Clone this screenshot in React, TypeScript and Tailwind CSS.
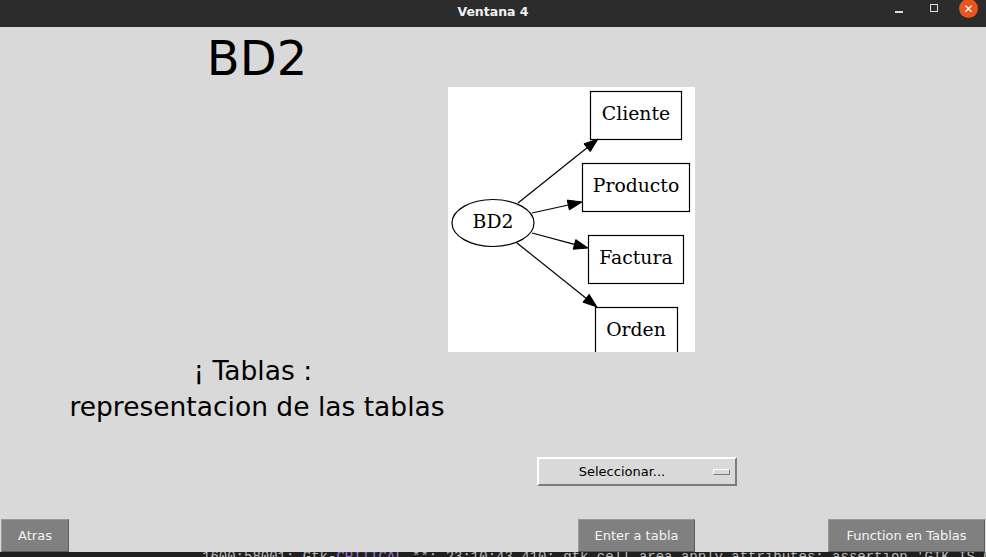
import React from "react";

const sans = { fontFamily: '"DejaVu Sans", "Noto Sans", sans-serif' };

function Diagram() {
  return (
    <svg width="247" height="265" viewBox="0 0 247 265" className="block">
      <rect x="0" y="0" width="247" height="265" fill="#ffffff" />
      <g stroke="#000" strokeWidth="1.2" fill="none">
        <ellipse cx="45" cy="136" rx="41" ry="23.5" />
        <rect x="142.5" y="4.5" width="91" height="48" />
        <rect x="134.5" y="76.5" width="107" height="48" />
        <rect x="140.5" y="148.5" width="95" height="48" />
        <rect x="147.5" y="220.5" width="82" height="48" />
        <line x1="70" y1="116" x2="139.1" y2="60.75" />
        <line x1="84" y1="126" x2="120.3" y2="118" />
        <line x1="84" y1="146" x2="126.5" y2="157.4" />
        <line x1="69" y1="156" x2="138.1" y2="211.25" />
      </g>
      <g fill="#000" stroke="#000" strokeWidth="1">
        <polygon points="150,52 142.2,64.65 136,56.85" />
        <polygon points="134,115 121.4,122.9 119.2,113.1" />
        <polygon points="140,161 125.2,162.2 127.8,152.6" />
        <polygon points="149,220 135,215.15 141.2,207.35" />
      </g>
      <g fill="#000" fontSize="18.8" textAnchor="middle" style={{ fontFamily: '"DejaVu Serif", "Liberation Serif", serif' }}>
        <text x="45" y="141">BD2</text>
        <text x="188" y="33">Cliente</text>
        <text x="188" y="105">Producto</text>
        <text x="188" y="177">Factura</text>
        <text x="188" y="249">Orden</text>
      </g>
    </svg>
  );
}

function TkButton({ label, className }: { label: string; className: string }) {
  return (
    <div
      className={`h-[33px] flex items-center justify-center bg-[#808080] border border-t-[#9a9a9a] border-l-[#9a9a9a] border-b-[#5c5c5c] border-r-[#5c5c5c] text-[13px] text-[#f4f4f4] ${className}`}
      style={sans}
    >
      {label}
    </div>
  );
}

export default function App() {
  return (
    <div className="w-[986px] h-[557px] flex flex-col bg-[#d9d9d9] overflow-hidden" style={sans}>
      {/* title bar */}
      <div className="h-[27px] bg-[#2c2c2c] flex items-center relative shrink-0">
        <div className="flex-1 text-center text-[12.5px] font-bold text-[#f2f2f2] pb-[3px]">Ventana 4</div>
        <div className="absolute right-0 top-0 h-[27px] flex items-start">
          <div className="w-[8px] h-[2px] bg-[#dcdcdc] mt-[11px] mr-[27px]" />
          <div className="w-[8px] h-[8px] border-[1.5px] border-[#dcdcdc] mt-[4px] mr-[21px]" />
          <div className="w-[19px] h-[19px] rounded-full bg-[#e95420] -mt-[1px] mr-[8px] flex items-center justify-center text-white text-[12px] leading-none">
            ✕
          </div>
        </div>
      </div>

      {/* content */}
      <div className="flex-1 flex flex-col">
        <div className="w-[514px] text-center text-[48px] leading-[56px] text-black mt-[3px]">BD2</div>
        <div className="ml-[448px] mt-[1px] w-[247px] h-[265px]">
          <Diagram />
        </div>
        <div className="w-[514px] mt-[1px] text-center text-[26.5px] leading-[36px] text-black">
          <div>¡ Tablas :{"\u00a0"}</div>
          <div>representacion de las tablas</div>
        </div>

        <div className="ml-[537px] mt-[32px] w-[200px] h-[29px] border-2 border-t-white border-l-white border-b-[#7c7c7c] border-r-[#7c7c7c] flex items-center">
          <div className="flex-1 text-center text-[13px] text-black pr-[8px]">Seleccionar...</div>
          <div className="w-[17px] h-[6px] mr-[5px] bg-[#d9d9d9] border border-t-white border-l-white border-b-[#7c7c7c] border-r-[#7c7c7c]" />
        </div>

        <div className="mt-[33px] flex">
          <TkButton label="Atras" className="ml-[1px] w-[68px]" />
          <TkButton label="Enter a tabla" className="ml-[509px] w-[117px]" />
          <TkButton label="Function en Tablas" className="ml-[133px] w-[157px]" />
        </div>
      </div>

      {/* terminal showing beneath */}
      <div className="h-[5px] bg-[#1f1f1f] overflow-hidden shrink-0">
        <div
          className="ml-[202px] -mt-[3px] whitespace-nowrap text-[14px] leading-[16px] text-[#bdbdbd]"
          style={{ fontFamily: '"Liberation Mono", "DejaVu Sans Mono", monospace' }}
        >
          1600:58001: Gtk-<span className="text-[#9a7ad8]">CRITICAL</span> **: 23:10:43.410: gtk_cell_area_apply_attributes: assertion 'GTK_IS_CELL
        </div>
      </div>
    </div>
  );
}
